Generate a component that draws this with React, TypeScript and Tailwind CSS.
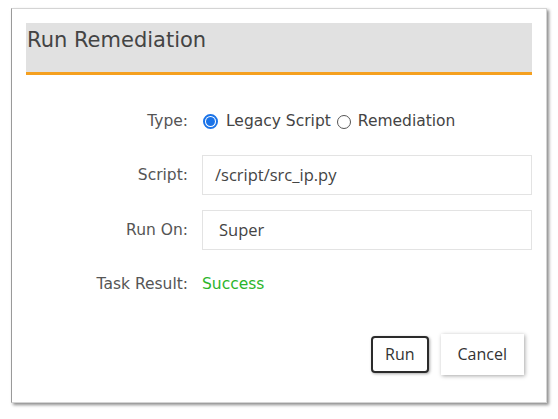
import React from "react";

function Row({ label, children }: { label: string; children: React.ReactNode }) {
  return (
    <div className="flex items-center">
      <div className="w-[176px] pr-[14px] text-right text-[15.5px] text-[#555]">{label}</div>
      <div className="flex-1 flex items-center">{children}</div>
    </div>
  );
}

export default function App() {
  return (
    <div className="w-[558px] h-[419px] bg-white pt-[8px] pl-[11px] font-['DejaVu_Sans',sans-serif]">
      <div className="w-[536px] h-[395px] bg-white border border-[#d4d4d4] border-l-[#9a9a9a] shadow-[2px_2px_3px_rgba(0,0,0,0.45)] px-[14px] pt-[14px] flex flex-col">
        {/* Header */}
        <div className="h-[52px] bg-[#e1e1e1] border-b-[3px] border-[#f5a01f] pl-[1px] pt-[2px]">
          <h1 className="text-[21px] leading-[30px] text-[#444]">Run Remediation</h1>
        </div>

        {/* Form */}
        <div className="flex flex-col mt-[35px]">
          <Row label="Type:">
            <label className="flex items-center text-[15.5px] text-[#444]">
              <span className="w-[15px] h-[15px] rounded-full border-2 border-[#1a73e8] flex items-center justify-center mr-[8px] ml-[1px]">
                <span className="w-[9px] h-[9px] rounded-full bg-[#1a73e8]" />
              </span>
              Legacy Script
            </label>
            <label className="flex items-center text-[15.5px] text-[#444] ml-[6px]">
              <span className="w-[14px] h-[14px] rounded-full border border-[#555] mr-[7px]" />
              Remediation
            </label>
          </Row>

          <div className="mt-[22px]">
            <Row label="Script:">
              <div className="w-[330px] h-[40px] border border-[#e3e3e3] flex items-center pl-[12px] text-[16.5px] text-[#444] font-['Open_Sans',sans-serif]">
                /script/src_ip.py
              </div>
            </Row>
          </div>

          <div className="mt-[15px]">
            <Row label="Run On:">
              <div className="w-[330px] h-[40px] border border-[#e3e3e3] flex items-center pl-[16px] text-[16.5px] text-[#444] font-['Open_Sans',sans-serif]">
                Super
              </div>
            </Row>
          </div>

          <div className="mt-[23px]">
            <Row label="Task Result:">
              <span className="text-[15.5px] text-[#2bb52b]">Success</span>
            </Row>
          </div>
        </div>

        {/* Buttons */}
        <div className="flex justify-end items-center gap-[12px] mt-[37px] pr-[8px]">
          <button className="h-[37px] px-[12px] border-2 border-[#2b2b2b] rounded-[4px] bg-white text-[16px] text-[#333] shadow-[1px_1px_3px_rgba(0,0,0,0.35)] font-['Open_Sans',sans-serif]">
            Run
          </button>
          <button className="h-[41px] px-[17px] bg-white text-[16px] text-[#333] shadow-[1px_1px_4px_rgba(0,0,0,0.35)] font-['Open_Sans',sans-serif]">
            Cancel
          </button>
        </div>
      </div>
    </div>
  );
}
